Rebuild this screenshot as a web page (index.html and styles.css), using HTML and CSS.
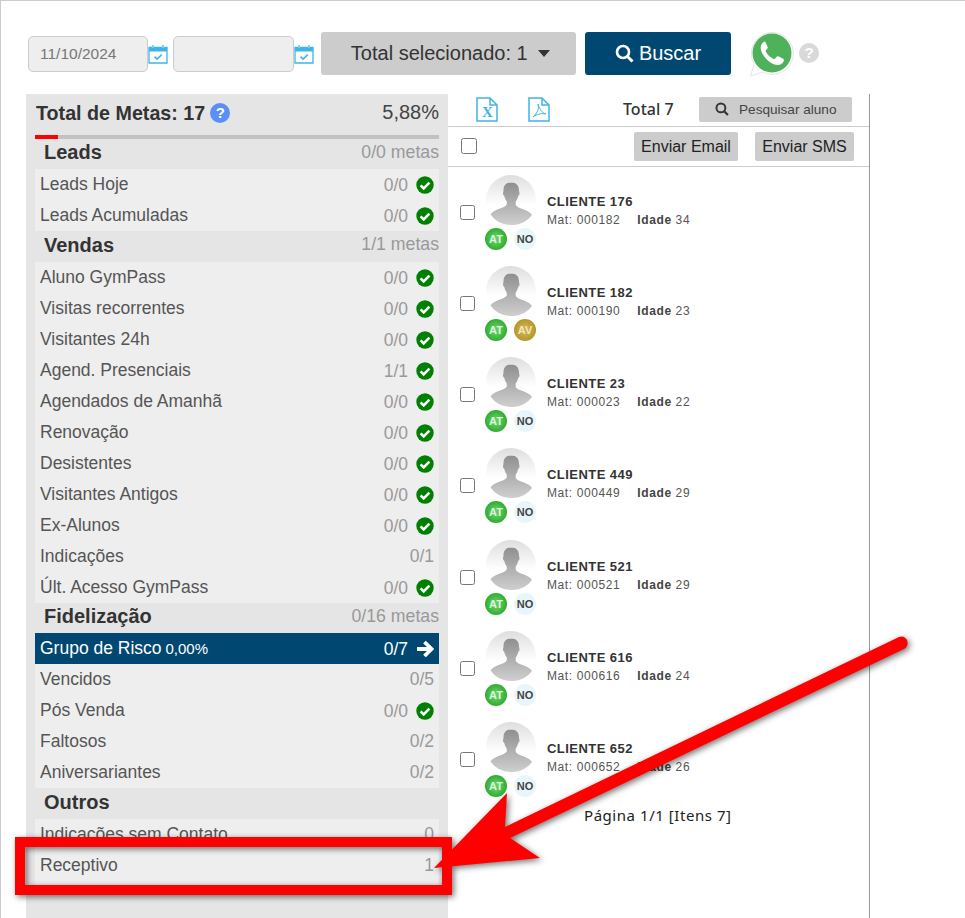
FILE: index.html
```html
<!DOCTYPE html>
<html lang="pt">
<head>
<meta charset="utf-8">
<title>Metas</title>
<link rel="stylesheet" href="styles.css">
</head>
<body>
<svg class="defs" width="0" height="0">
  <defs>
    <symbol id="cal" viewBox="0 0 20 20"><path d="M1 3.5h18v15.5H1z" fill="#fff" stroke="#3fb4e8" stroke-width="1.3"/><path d="M1 3h18v4.5H1z" fill="#3fb4e8"/><path d="M5 1v4M15 1v4" stroke="#3fb4e8" stroke-width="1.6"/><path d="M5 1.4v2.6M15 1.4v2.6" stroke="#fff" stroke-width=".6"/><path d="M6.5 12.6l2.6 2.5 4.6-4.4" fill="none" stroke="#3fb4e8" stroke-width="1.6"/></symbol>
    <symbol id="ok" viewBox="0 0 18 18"><circle cx="9" cy="9" r="8.7" fill="#008000"/><path d="M4.6 9.3l3.1 3.1 5.7-5.8" fill="none" stroke="#fff" stroke-width="2.6"/></symbol>
    <symbol id="search" viewBox="0 0 18 18"><circle cx="7.6" cy="7.6" r="5.7" fill="none" stroke="currentColor" stroke-width="2.5"/><path d="M11.8 11.8l4.8 4.8" stroke="currentColor" stroke-width="2.8"/></symbol>
    <symbol id="person" viewBox="0 0 50 50"><defs><linearGradient id="pg" x1="0" y1="0" x2="0" y2="1"><stop offset="0" stop-color="#8f8f8f"/><stop offset="1" stop-color="#cfcfcf"/></linearGradient><linearGradient id="bg" x1="0" y1="0" x2="0" y2="1"><stop offset="0" stop-color="#dedede"/><stop offset=".6" stop-color="#fff"/></linearGradient></defs><circle cx="25" cy="25" r="25" fill="url(#bg)"/><path d="M25 7.500c5.500 0 8 3 8 8 0 1 .5 1.500.5 3 0 1.500-1 2-1.300 2.500-.6 2.500-1.500 4.500-2.500 5.500v3.500c1 2 4 3 8.300 4.500 4 1.500 6.500 3 8 5.500A25 25 0 0 1 25 50 25 25 0 0 1 4.500 39.500c1.500-2.500 4-4 8-5.500 4.300-1.500 7.300-2.500 8.300-4.500V26.500c-1-1-1.900-3-2.500-5.500-.3-.5-1.300-1-1.300-2.500 0-1.500.5-2 .5-3 0-5 2.500-8 8-8z" fill="url(#pg)"/></symbol>
  </defs>
</svg>

<div class="page">
  <header class="filters">
    <div class="date-input filled">11/10/2024</div>
    <svg class="cal"><use href="#cal"/></svg>
    <div class="date-input second"></div>
    <svg class="cal"><use href="#cal"/></svg>
    <button class="select-btn">Total selecionado: 1 <span class="caret"></span></button>
    <button class="search-btn"><svg class="search-ico"><use href="#search"/></svg>Buscar</button>
    <svg class="wa" viewBox="0 0 46 48">
      <path d="M2.500 46l3.700-12A21 21 0 1 1 14.500 42z" fill="#fff" stroke="#e4e4e4" stroke-width="1"/>
      <circle cx="24" cy="23" r="19.500" fill="#4fb25a"/>
      <path d="M16.500 11.500c-1.800.8-4 3.300-3.800 6.500.3 4.800 4 10 7.800 13 3.500 2.800 7.500 4.500 10.500 3.900 2.500-.5 4.700-2.500 4.900-4.700.1-.8-.2-1.200-.8-1.500l-4.700-2.400c-.7-.3-1.200-.2-1.700.4l-1.700 2.100c-.4.500-.9.500-1.500.2-3.300-1.500-6-4-7.700-7.400-.3-.6-.2-1 .2-1.400l1.400-1.700c.4-.5.5-1 .2-1.600l-1.900-4.500c-.3-.7-.6-1-1.200-.9z" fill="#fff"/>
    </svg>
    <span class="help-gray">?</span>
  </header>

  <main class="content">
    <aside class="goals">
      <div class="goals-head">
        <strong class="goals-title">Total de Metas: 17</strong>
        <span class="help-blue">?</span>
        <span class="goals-pct">5,88%</span>
      </div>
      <div class="progress"><div class="progress-fill"></div></div>

      <div class="section"><h2>Leads</h2><span>0/0 metas</span></div>
      <ul class="rows">
        <li><span>Leads Hoje</span><span class="val">0/0</span><svg class="ok"><use href="#ok"/></svg></li>
        <li><span>Leads Acumuladas</span><span class="val">0/0</span><svg class="ok"><use href="#ok"/></svg></li>
      </ul>

      <div class="section tall"><h2>Vendas</h2><span>1/1 metas</span></div>
      <ul class="rows">
        <li><span>Aluno GymPass</span><span class="val">0/0</span><svg class="ok"><use href="#ok"/></svg></li>
        <li><span>Visitas recorrentes</span><span class="val">0/0</span><svg class="ok"><use href="#ok"/></svg></li>
        <li><span>Visitantes 24h</span><span class="val">0/0</span><svg class="ok"><use href="#ok"/></svg></li>
        <li><span>Agend. Presenciais</span><span class="val">1/1</span><svg class="ok"><use href="#ok"/></svg></li>
        <li><span>Agendados de Amanhã</span><span class="val">0/0</span><svg class="ok"><use href="#ok"/></svg></li>
        <li><span>Renovação</span><span class="val">0/0</span><svg class="ok"><use href="#ok"/></svg></li>
        <li><span>Desistentes</span><span class="val">0/0</span><svg class="ok"><use href="#ok"/></svg></li>
        <li><span>Visitantes Antigos</span><span class="val">0/0</span><svg class="ok"><use href="#ok"/></svg></li>
        <li><span>Ex-Alunos</span><span class="val">0/0</span><svg class="ok"><use href="#ok"/></svg></li>
        <li><span>Indicações</span><span class="val plain">0/1</span></li>
        <li><span>Últ. Acesso GymPass</span><span class="val">0/0</span><svg class="ok"><use href="#ok"/></svg></li>
      </ul>

      <div class="section"><h2>Fidelização</h2><span>0/16 metas</span></div>
      <ul class="rows">
        <li class="active"><span>Grupo de Risco <small>0,00%</small></span><span class="val">0/7</span>
          <svg class="go" viewBox="0 0 18 18"><path d="M1 9h14M8.500 2L15.500 9 8.500 16" fill="none" stroke="#fff" stroke-width="3.800"/></svg></li>
        <li><span>Vencidos</span><span class="val plain">0/5</span></li>
        <li><span>Pós Venda</span><span class="val">0/0</span><svg class="ok"><use href="#ok"/></svg></li>
        <li><span>Faltosos</span><span class="val plain">0/2</span></li>
        <li><span>Aniversariantes</span><span class="val plain">0/2</span></li>
      </ul>

      <div class="section tall"><h2>Outros</h2></div>
      <ul class="rows">
        <li><span>Indicações sem Contato</span><span class="val plain">0</span></li>
        <li class="last"><span>Receptivo</span><span class="val plain">1</span></li>
      </ul>
    </aside>

    <section class="clients">
      <div class="toolbar">
        <svg class="file" viewBox="0 0 22 25"><path d="M1 1h13l7 7v16H1z" fill="none" stroke="#3fb4e8" stroke-width="1.500"/><path d="M14 1v7h7" fill="none" stroke="#3fb4e8" stroke-width="1.500"/></svg>
        <span class="file-x">X</span>
        <svg class="file pdf" viewBox="0 0 22 25"><path d="M1 1h13l7 7v16H1z" fill="none" stroke="#3fb4e8" stroke-width="1.500"/><path d="M14 1v7h7" fill="none" stroke="#3fb4e8" stroke-width="1.500"/><path d="M10 7c.8 4 1 7-5 13 4-3 8-4 13-3-4-1-6.500-5-8-10z" fill="none" stroke="#3fb4e8" stroke-width="1"/></svg>
        <span class="total">Total 7</span>
        <button class="find-btn"><svg class="find-ico"><use href="#search"/></svg>Pesquisar aluno</button>
      </div>
      <div class="actions">
        <input type="checkbox" class="check-all">
        <button class="send email">Enviar Email</button>
        <button class="send">Enviar SMS</button>
      </div>
      <div class="list">
        <article class="client"><input type="checkbox" class="check"><div class="who"><svg class="avatar"><use href="#person"/></svg><div class="badges"><span class="at">AT</span><span class="no">NO</span></div></div><div class="info"><h3>CLIENTE 176</h3><p>Mat: 000182<b>Idade</b> 34</p></div></article>
        <article class="client"><input type="checkbox" class="check"><div class="who"><svg class="avatar"><use href="#person"/></svg><div class="badges"><span class="at">AT</span><span class="av">AV</span></div></div><div class="info"><h3>CLIENTE 182</h3><p>Mat: 000190<b>Idade</b> 23</p></div></article>
        <article class="client"><input type="checkbox" class="check"><div class="who"><svg class="avatar"><use href="#person"/></svg><div class="badges"><span class="at">AT</span><span class="no">NO</span></div></div><div class="info"><h3>CLIENTE 23</h3><p>Mat: 000023<b>Idade</b> 22</p></div></article>
        <article class="client"><input type="checkbox" class="check"><div class="who"><svg class="avatar"><use href="#person"/></svg><div class="badges"><span class="at">AT</span><span class="no">NO</span></div></div><div class="info"><h3>CLIENTE 449</h3><p>Mat: 000449<b>Idade</b> 29</p></div></article>
        <article class="client"><input type="checkbox" class="check"><div class="who"><svg class="avatar"><use href="#person"/></svg><div class="badges"><span class="at">AT</span><span class="no">NO</span></div></div><div class="info"><h3>CLIENTE 521</h3><p>Mat: 000521<b>Idade</b> 29</p></div></article>
        <article class="client"><input type="checkbox" class="check"><div class="who"><svg class="avatar"><use href="#person"/></svg><div class="badges"><span class="at">AT</span><span class="no">NO</span></div></div><div class="info"><h3>CLIENTE 616</h3><p>Mat: 000616<b>Idade</b> 24</p></div></article>
        <article class="client"><input type="checkbox" class="check"><div class="who"><svg class="avatar"><use href="#person"/></svg><div class="badges"><span class="at">AT</span><span class="no">NO</span></div></div><div class="info"><h3>CLIENTE 652</h3><p>Mat: 000652<b>Idade</b> 26</p></div></article>
      </div>
      <p class="pager">Página 1/1 [Itens 7]</p>
    </section>
  </main>
</div>

<svg class="annotation" viewBox="0 0 965 918" width="965" height="918">
  <rect x="20" y="842" width="427" height="48" fill="none" stroke="#f00" stroke-width="10"/>
  <path d="M434 868L507 793 505 827 899 637Q904 635 907 640 909 646 904 649L510 838 540 858z" fill="#f00"/>
</svg>
</body>
</html>
```
FILE: styles.css
```css
* { box-sizing: border-box; }
html, body { margin: 0; padding: 0; }
body { background: #fff; font-family: "Liberation Sans", Arial, sans-serif; color: #333; overflow: hidden; }
.defs { position: absolute; }
.page { width: 965px; height: 918px; border-top: 1px solid #ccc; border-left: 1px solid #ccc; overflow: hidden; }

/* filters */
.filters { display: flex; align-items: center; height: 93px; padding: 30px 0 17px 27px; }
.date-input { width: 120px; height: 36px; background: #eee; border: 1px solid #ccc; border-radius: 5px; font-size: 15.5px; line-height: 34px; padding-left: 11px; color: #777; }
.date-input.second { width: 121px; margin-left: 5px; }
.cal { width: 20px; height: 20px; flex: none; }
.select-btn { width: 255px; height: 43px; margin: -1px 0 0 7px; padding: 0 0 0 4px; background: #ccc; border: 0; border-radius: 3px; font: 20px "Liberation Sans", Arial, sans-serif; color: #333; }
.caret { display: inline-block; margin-left: 5px; vertical-align: 3px; border: 6.500px solid transparent; border-top: 7px solid #333; border-bottom: 0; }
.search-btn { width: 146px; height: 43px; margin: -1px 0 0 9px; background: #004872; border: 0; border-radius: 3px; color: #fff; font: 20px "Liberation Sans", Arial, sans-serif; display: flex; align-items: center; justify-content: center; }
.search-ico { width: 19px; height: 19px; margin-right: 5px; color: #fff; }
.wa { width: 46px; height: 48px; margin-left: 17px; flex: none; }
.help-gray { width: 20px; height: 20px; margin: -2px 0 0 5px; border-radius: 50%; background: #d9d9d9; color: #fff; font: bold 15px/20px "Liberation Sans", sans-serif; text-align: center; }

/* layout */
.content { display: flex; margin-left: 25px; }

/* goals */
.goals { width: 422px; height: 824px; background: #e5e5e5; padding: 0 9px; flex: none; }
.goals-head { display: flex; align-items: center; height: 41px; padding: 0 0 3px 1px; }
.goals-title { font-size: 19.700px; color: #333; }
.help-blue { width: 20px; height: 20px; margin-left: 5px; margin-top: -1px; border-radius: 50%; background: #5c8ff5; color: #fff; font: bold 15px/20px "Liberation Sans", sans-serif; text-align: center; }
.goals-pct { margin-left: auto; font-size: 20px; color: #444; margin-top: -2px; }
.progress { height: 4px; background: #c2c2c2; }
.progress-fill { width: 23px; height: 4px; background: #f00; }
.section { display: flex; align-items: center; justify-content: space-between; height: 30px; padding: 0 0 3px 9px; font-size: 17.700px; color: #999; }
.section.tall { height: 31px; }
.section h2 { margin: 0; font-size: 20px; font-weight: bold; color: #333; }
.section span { margin-top: -1px; }
.rows { list-style: none; margin: 0; padding: 0; background: #eee; font-size: 17.500px; color: #555; }
.rows li { display: flex; align-items: center; height: 31px; padding: 0 5px; }
.rows li.last { height: 35px; padding-bottom: 4px; }
.rows li > span:first-child { margin-top: -1px; }
.val { margin-left: auto; color: #999; margin-top: 1px; }
.val.plain { margin-top: -1px; }
.ok { width: 18px; height: 18px; margin-left: 8px; flex: none; }
.go { width: 18px; height: 18px; margin-left: 8px; flex: none; }
.rows li.active { background: #004872; color: #fff; }
.rows li.active .val { color: #fff; }
.rows li.active small { font-size: 15px; margin-left: -1px; }

/* clients */
.clients { width: 422px; height: 824px; border-right: 1px solid #999; flex: none; position: relative; }
.toolbar { display: flex; align-items: center; height: 33px; border-bottom: 1px solid #ccc; padding: 0 0 2px 28px; position: relative; }
.file { width: 22px; height: 25px; flex: none; }
.file-x { position: absolute; left: 34px; top: 10px; font: bold 15px "Liberation Serif", serif; color: #3fb4e8; }
.file.pdf { margin-left: 30px; }
.total { margin-left: 73px; width: 76px; font: 500 16px "Noto Sans", sans-serif; color: #333; }
.find-btn { width: 153px; height: 25px; background: #ccc; border: 0; border-radius: 2px; display: flex; align-items: center; font: 13.600px "Liberation Sans", sans-serif; color: #444; padding: 0 0 0 16px; }
.find-ico { width: 14px; height: 14px; margin-right: 10px; color: #333; }
.actions { display: flex; align-items: center; height: 40px; border-bottom: 1px solid #ccc; padding-left: 13px; }
.check-all { width: 16px; height: 16px; margin: -2px 0 0; }
.send { height: 29px; background: #ccc; border: 0; border-radius: 2px; font: 16px "Liberation Sans", sans-serif; color: #222; padding: 0; width: 99px; margin-left: 17px; }
.send.email { width: 104px; margin-left: 157px; }
.list { display: flex; flex-direction: column; }
.client { display: flex; align-items: flex-start; height: 91.170px; padding: 8px 0 0 12px; }
.check { width: 15px; height: 15px; margin: 30px 0 0 0; flex: none; }
.who { width: 50px; margin-left: 11px; flex: none; }
.avatar { width: 50px; height: 50px; display: block; }
.badges { display: flex; gap: 7px; margin: 3px 0 0 -1px; }
.badges span { width: 22px; height: 22px; border-radius: 50%; font: bold 11px/22px "Liberation Sans", sans-serif; text-align: center; }
.at { background: radial-gradient(circle, #62cb62 20%, #0f9c0f 100%); color: #dff5df; }
.no { background: #e8f6fb; color: #444; }
.av { background: radial-gradient(circle, #cdb048 20%, #a6871a 100%); color: #f0e6c0; }
.info { margin: 18px 0 0 11px; }
.info h3 { margin: 0; font-size: 13px; font-weight: bold; color: #333; letter-spacing: .45px; line-height: 17px; }
.info p { margin: 2px 0 0; font-size: 12px; color: #555; letter-spacing: .6px; line-height: 16px; }
.info b { margin-left: 17px; color: #444; font-weight: bold; }
.pager { position: absolute; left: 136px; top: 711px; margin: 0; font: 15px "Noto Sans", sans-serif; color: #222; letter-spacing: .55px; }

/* annotation lies over the page */
.annotation { position: absolute; left: 0; top: 0; pointer-events: none; filter: drop-shadow(2px 2px 3px rgba(0,0,0,.55)); }
```
